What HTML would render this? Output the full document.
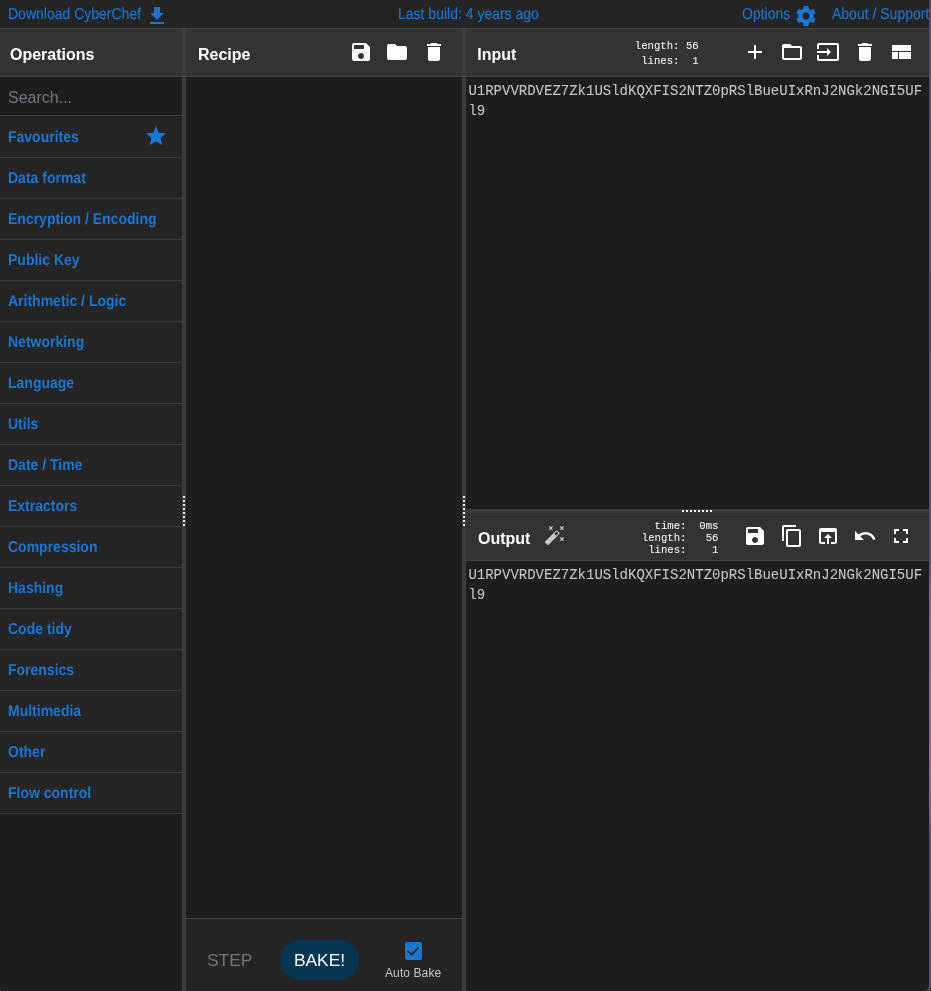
<!DOCTYPE html>
<html>
<head>
<meta charset="utf-8">
<title>CyberChef</title>
<style>
*{box-sizing:border-box;margin:0;padding:0}
html,body{width:931px;height:991px;overflow:hidden;background:#1e1e1e;font-family:"Liberation Sans",sans-serif;color:#c5c5c5}
.abs{position:absolute}
#edge{position:absolute;left:929px;top:0;width:2px;height:991px;background:linear-gradient(to bottom,#4d485e 0px,#55506c 60px,#4f4a68 300px,#534e6c 560px,#7d6990 595px,#846e96 760px,#7a668e 810px,#554e6e 840px,#544d6c 991px)}
#banner{position:absolute;left:0;top:0;width:929px;height:29px;background:#252525;border-bottom:1px solid #444;color:#1976d2;font-size:14px;line-height:20px;white-space:nowrap;overflow:hidden}
#banner span{position:absolute;top:4px;-webkit-text-stroke:0.12px #1976d2;transform:matrix(1,0,0.0005,1.125,0,0);transform-origin:0 15px}
.title{position:absolute;height:48px;background:#333;border-bottom:1px solid #444;color:#fff;font-weight:bold;font-size:16px;line-height:48px;white-space:nowrap}
.title b{position:absolute;top:2px;font-weight:bold}
.gutter{position:absolute;background:#3c3c3c}
.dot{position:absolute;width:2px;height:2px;background:#eee}
#ops{position:absolute;left:0;top:77px;width:182px;height:914px;background:#1e1e1e}
#search{position:absolute;left:0;top:0;width:182px;height:39px;border-bottom:1px solid #444;color:#6c757d;font-size:16px;line-height:40px;padding-top:1px;padding-left:8px}
.cat{position:absolute;left:0;width:182px;height:41px;background:#252525;border-bottom:1px solid #3c3c3c;color:#1976d2;font-weight:bold;font-size:14px;line-height:40px;padding-left:8px;white-space:nowrap}
.cat span{display:block;transform:matrix(1,0,0.0005,1.125,0,0);transform-origin:0 25px}
.mono{font-family:"Liberation Mono",monospace}
.io-text{position:absolute;left:468.4px;width:460px;height:20px;font-family:"Liberation Mono",monospace;font-size:14px;line-height:20px;color:#c5c5c5;white-space:pre;-webkit-text-stroke:0.08px #c5c5c5}
.info{position:absolute;font-family:"Liberation Mono",monospace;font-size:10.667px;line-height:12px;color:#f4f4f4;-webkit-text-stroke:0.06px #f4f4f4;white-space:pre;text-align:right;font-weight:normal}
svg.ic{position:absolute;fill:#fff}
</style>
</head>
<body>
<div id="root" style="position:absolute;left:0;top:0;width:931px;height:991px;will-change:transform">
<div id="banner">
  <span style="left:8px">Download CyberChef</span>
  <span style="left:398px">Last build: 4 years ago</span>
  <span style="left:741.5px">Options</span>
  <span style="left:832px">About / Support</span>
</div>

<!-- Operations -->
<div class="title" style="left:0;top:29px;width:182px"><b style="left:10px">Operations</b></div>
<div id="ops">
  <div id="search">Search...</div>
  <div class="cat" style="top:40px"><span>Favourites</span></div>
  <div class="cat" style="top:81px"><span>Data format</span></div>
  <div class="cat" style="top:122px"><span>Encryption / Encoding</span></div>
  <div class="cat" style="top:163px"><span>Public Key</span></div>
  <div class="cat" style="top:204px"><span>Arithmetic / Logic</span></div>
  <div class="cat" style="top:245px"><span>Networking</span></div>
  <div class="cat" style="top:286px"><span>Language</span></div>
  <div class="cat" style="top:327px"><span>Utils</span></div>
  <div class="cat" style="top:368px"><span>Date / Time</span></div>
  <div class="cat" style="top:409px"><span>Extractors</span></div>
  <div class="cat" style="top:450px"><span>Compression</span></div>
  <div class="cat" style="top:491px"><span>Hashing</span></div>
  <div class="cat" style="top:532px"><span>Code tidy</span></div>
  <div class="cat" style="top:573px"><span>Forensics</span></div>
  <div class="cat" style="top:614px"><span>Multimedia</span></div>
  <div class="cat" style="top:655px"><span>Other</span></div>
  <div class="cat" style="top:696px"><span>Flow control</span></div>
</div>

<!-- gutters -->
<div class="gutter" id="g1" style="left:182px;top:29px;width:4px;height:962px"></div>
<div class="gutter" id="g2" style="left:462px;top:29px;width:4px;height:962px"></div>
<div class="gutter" id="g3" style="left:466px;top:509px;width:463px;height:4px"></div>

<!-- Recipe -->
<div class="title" style="left:186px;top:29px;width:276px"><b style="left:12px">Recipe</b></div>
<div class="abs" id="controls" style="left:186px;top:918px;width:276px;height:73px;background:#252525;border-top:1px solid #444"></div>

<!-- Input -->
<div class="title" style="left:466px;top:29px;width:463px"><b style="left:11.3px">Input</b></div>
<div class="io-text" style="top:81px">U1RPVVRDVEZ7Zk1USldKQXFIS2NTZ0pRSlBueUIxRnJ2NGk2NGI5UF</div>
<div class="io-text" style="top:101px">l9</div>

<!-- Output -->
<div class="title" style="left:466px;top:513px;width:463px"><b style="left:12px">Output</b></div>
<div class="io-text" style="top:565px">U1RPVVRDVEZ7Zk1USldKQXFIS2NTZ0pRSlBueUIxRnJ2NGk2NGI5UF</div>
<div class="io-text" style="top:585px">l9</div>

<!-- banner icons -->
<svg class="ic" style="left:145px;top:4px;fill:#1976d2" width="24" height="24" viewBox="0 0 24 24"><path d="M19 9h-4V3H9v6H5l7 7 7-7zM5 18v2h14v-2H5z"/></svg>
<svg class="ic" style="left:794px;top:4px;fill:#1976d2" width="24" height="24" viewBox="0 0 24 24"><path d="M19.43 12.98c.04-.32.07-.64.07-.98s-.03-.66-.07-.98l2.11-1.65c.19-.15.24-.42.12-.64l-2-3.46c-.12-.22-.39-.3-.61-.22l-2.49 1c-.52-.4-1.08-.73-1.69-.98l-.38-2.65C14.46 2.18 14.25 2 14 2h-4c-.25 0-.46.18-.49.42l-.38 2.650c-.61.25-1.17.59-1.69.98l-2.490-1c-.23-.09-.49 0-.61.22l-2 3.460c-.13.22-.07.49.12.64l2.110 1.650c-.04.32-.07.65-.07.98s.03.66.07.98l-2.110 1.650c-.19.15-.24.42-.12.64l2 3.460c.12.22.39.3.61.22l2.490-1c.52.4 1.080.73 1.690.98l.38 2.650c.03.24.24.42.49.42h4c.25 0 .46-.18.49-.42l.38-2.650c.61-.25 1.170-.59 1.690-.98l2.490 1c.23.09.49 0 .61-.22l2-3.460c.12-.22.07-.49-.12-.64l-2.110-1.650zM12 15.500c-1.930 0-3.500-1.570-3.500-3.500s1.570-3.500 3.500-3.500 3.500 1.570 3.500 3.500-1.570 3.500-3.500 3.500z"/></svg>
<!-- star -->
<svg class="ic" style="left:144px;top:124px;fill:#1976d2" width="24" height="24" viewBox="0 0 24 24"><path d="M12 17.270L18.180 21l-1.640-7.030L22 9.240l-7.190-.610L12 2 9.190 8.630 2 9.240l5.460 4.730L5.820 21z"/></svg>
<!-- recipe icons -->
<svg class="ic" style="left:349px;top:40px" width="24" height="24" viewBox="0 0 24 24"><path d="M17 3H5c-1.11 0-2 .9-2 2v14c0 1.1.89 2 2 2h14c1.1 0 2-.9 2-2V7l-4-4zm-5 16c-1.66 0-3-1.34-3-3s1.34-3 3-3 3 1.34 3 3-1.34 3-3 3zm3-10H5V5h10v4z"/></svg>
<svg class="ic" style="left:385px;top:40px" width="24" height="24" viewBox="0 0 24 24"><path d="M10 4H4c-1.1 0-1.99.9-1.99 2L2 18c0 1.1.9 2 2 2h16c1.1 0 2-.9 2-2V8c0-1.1-.9-2-2-2h-8l-2-2z"/></svg>
<svg class="ic" style="left:422px;top:40px" width="24" height="24" viewBox="0 0 24 24"><path d="M6 19c0 1.1.9 2 2 2h8c1.1 0 2-.9 2-2V7H6v12zM19 4h-3.500l-1-1h-5l-1 1H5v2h14V4z"/></svg>
<!-- input icons -->
<svg class="ic" style="left:743px;top:40px" width="24" height="24" viewBox="0 0 24 24"><path d="M19 13h-6v6h-2v-6H5v-2h6V5h2v6h6v2z"/></svg>
<svg class="ic" style="left:780px;top:40px" width="24" height="24" viewBox="0 0 24 24"><path d="M20 6h-8l-2-2H4c-1.1 0-1.99.9-1.99 2L2 18c0 1.1.9 2 2 2h16c1.1 0 2-.9 2-2V8c0-1.1-.9-2-2-2zm0 12H4V8h16v10z"/></svg>
<svg class="ic" style="left:816px;top:40px" width="24" height="24" viewBox="0 0 24 24"><path d="M21 3.010H3c-1.1 0-2 .9-2 2V9h2V4.990h18v14.030H3V15H1v4.010c0 1.100.9 1.980 2 1.980h18c1.100 0 2-.880 2-1.980v-14c0-1.110-.9-2-2-2zM11 16l4-4-4-4v3H1v2h10v3z"/></svg>
<svg class="ic" style="left:853px;top:40px" width="24" height="24" viewBox="0 0 24 24"><path d="M6 19c0 1.1.9 2 2 2h8c1.1 0 2-.9 2-2V7H6v12zM19 4h-3.500l-1-1h-5l-1 1H5v2h14V4z"/></svg>
<svg class="ic" style="left:889px;top:40px" width="24" height="24" viewBox="0 0 24 24"><path d="M3 19h6v-7H3v7zm7 0h12v-7H10v7zM3 5v6h19V5H3z"/></svg>
<!-- output icons -->
<svg class="ic" style="left:743px;top:524px" width="24" height="24" viewBox="0 0 24 24"><path d="M17 3H5c-1.11 0-2 .9-2 2v14c0 1.1.89 2 2 2h14c1.1 0 2-.9 2-2V7l-4-4zm-5 16c-1.66 0-3-1.34-3-3s1.34-3 3-3 3 1.34 3 3-1.34 3-3 3zm3-10H5V5h10v4z"/></svg>
<svg class="ic" style="left:780px;top:524px" width="24" height="24" viewBox="0 0 24 24"><path d="M16 1H4c-1.1 0-2 .9-2 2v14h2V3h12V1zm3 4H8c-1.1 0-2 .9-2 2v14c0 1.1.9 2 2 2h11c1.1 0 2-.9 2-2V7c0-1.1-.9-2-2-2zm0 16H8V7h11v14z"/></svg>
<svg class="ic" style="left:816px;top:524px" width="24" height="24" viewBox="0 0 24 24"><path d="M19 4H5c-1.110 0-2 .9-2 2v12c0 1.100.890 2 2 2h4v-2H5V8h14v10h-4v2h4c1.100 0 2-.9 2-2V6c0-1.100-.890-2-2-2zm-7 6l-4 4h3v6h2v-6h3l-4-4z"/></svg>
<svg class="ic" style="left:853px;top:524px" width="24" height="24" viewBox="0 0 24 24"><path d="M12.5 8c-2.650 0-5.050.990-6.900 2.600L2 7v9h9l-3.620-3.620c1.390-1.160 3.160-1.880 5.120-1.880 3.540 0 6.550 2.310 7.600 5.500l2.370-.780C21.080 11.030 17.150 8 12.500 8z"/></svg>
<svg class="ic" style="left:889px;top:524px" width="24" height="24" viewBox="0 0 24 24"><path d="M7 14H5v5h5v-2H7v-3zm-2-4h2V7h3V5H5v5zm12 7h-3v2h5v-5h-2v3zM14 5v2h3v3h2V5h-5z"/></svg>
<svg class="ic" style="left:544px;top:524px;fill:#c5c5c5" width="22" height="22" viewBox="0 0 24 24"><path d="M7.5,5.6L5,7L6.4,4.500L5,2L7.500,3.400L10,2L8.600,4.500L10,7L7.500,5.600M19.500,15.400L22,14L20.600,16.500L22,19L19.500,17.600L17,19L18.400,16.500L17,14L19.500,15.400M22,2L20.600,4.500L22,7L19.500,5.600L17,7L18.400,4.500L17,2L19.500,3.400L22,2M13.340,12.780L15.780,10.340L13.660,8.220L11.220,10.660L13.340,12.780M14.370,7.290L16.710,9.630C17.100,10 17.100,10.650 16.710,11.040L5.040,22.710C4.650,23.100 4,23.100 3.630,22.710L1.290,20.370C0.900,20 0.900,19.350 1.290,18.960L12.960,7.290C13.350,6.900 14,6.900 14.370,7.290Z"/></svg>
<div class="info" style="left:621.7px;top:39px;width:77px;line-height:15px">length: 56
 lines:  1</div>
<div class="info" style="left:641.5px;top:520px;width:77px;line-height:12px">  time:  0ms
length:   56
 lines:    1</div>
<div class="dot" style="left:183px;top:496px"></div>
<div class="dot" style="left:183px;top:500px"></div>
<div class="dot" style="left:183px;top:504px"></div>
<div class="dot" style="left:183px;top:508px"></div>
<div class="dot" style="left:183px;top:512px"></div>
<div class="dot" style="left:183px;top:516px"></div>
<div class="dot" style="left:183px;top:520px"></div>
<div class="dot" style="left:183px;top:524px"></div>
<div class="dot" style="left:463px;top:496px"></div>
<div class="dot" style="left:463px;top:500px"></div>
<div class="dot" style="left:463px;top:504px"></div>
<div class="dot" style="left:463px;top:508px"></div>
<div class="dot" style="left:463px;top:512px"></div>
<div class="dot" style="left:463px;top:516px"></div>
<div class="dot" style="left:463px;top:520px"></div>
<div class="dot" style="left:463px;top:524px"></div>
<div class="dot" style="left:682px;top:510px"></div>
<div class="dot" style="left:686px;top:510px"></div>
<div class="dot" style="left:690px;top:510px"></div>
<div class="dot" style="left:694px;top:510px"></div>
<div class="dot" style="left:698px;top:510px"></div>
<div class="dot" style="left:702px;top:510px"></div>
<div class="dot" style="left:706px;top:510px"></div>
<div class="dot" style="left:710px;top:510px"></div>
<div class="abs" style="left:207px;top:949px;font-size:17.4px;line-height:22px;color:#6c757d;white-space:nowrap">STEP</div>
<div class="abs" style="left:280px;top:940px;width:79px;height:40px;border-radius:20px;background:#073655;color:#fff;font-size:17.4px;line-height:40px;text-align:center;white-space:nowrap">BAKE!</div>
<div class="abs" style="left:405px;top:942px;width:17px;height:18px;border-radius:2px;background:#1976d2"></div>
<svg class="abs" style="left:400px;top:940px" width="28" height="24" viewBox="400 940 28 24"><polyline points="407.8,950.9 411.65,954.75 418.4,947.4" fill="none" stroke="#252525" stroke-width="1.7"/></svg>
<div class="abs" style="left:385px;top:966px;font-size:12px;line-height:15px;color:#c5c5c5;white-space:nowrap;letter-spacing:0.1px">Auto Bake</div>
<div id="edge"></div>
<div class="abs" style="left:924px;top:985px;width:5px;height:6px;background:#4f4a66"><div style="width:5px;height:6px;background:#1e1e1e;border-bottom-right-radius:5px 6px"></div></div>
<div class="abs" style="left:930px;top:988px;width:1px;height:3px;background:#26232f"></div>
<div class="abs" style="left:0;top:989px;width:2px;height:2px;background:#5a5478"><div style="width:2px;height:2px;background:#1e1e1e;border-bottom-left-radius:2px"></div></div>

</div>
</body>
</html>
